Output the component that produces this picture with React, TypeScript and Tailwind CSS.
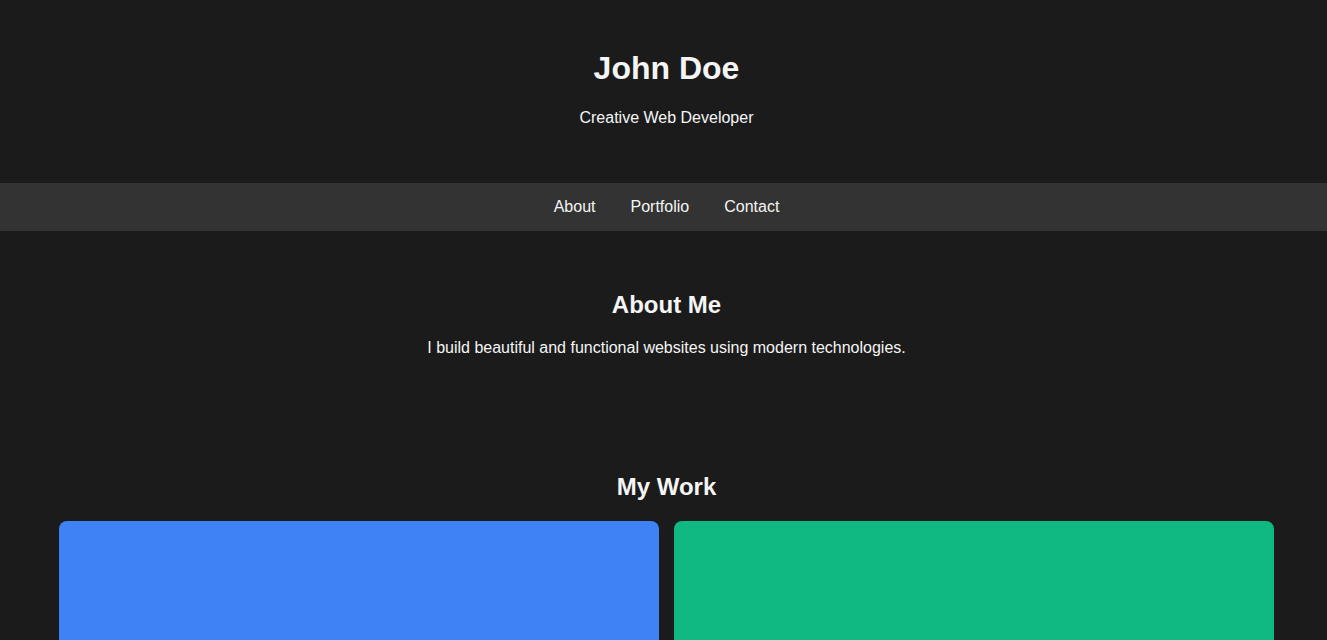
export default function App() {
  return (
    <div
      className="min-h-screen bg-[#1b1b1b] text-[#f5f5f5]"
      style={{ fontFamily: '"Liberation Sans", Arial, sans-serif' }}
    >
      <header className="flex flex-col items-center pt-[50px] pb-[56px] pl-[6px]">
        <h1 className="text-[32px] leading-[37px] font-bold">John Doe</h1>
        <p className="mt-[22px] text-base leading-[18px]">Creative Web Developer</p>
      </header>

      <nav className="h-12 bg-[#333333] flex items-center justify-center gap-[35px] pl-[6px] text-base">
        <a href="#about">About</a>
        <a href="#portfolio">Portfolio</a>
        <a href="#contact">Contact</a>
      </nav>

      <section id="about" className="flex flex-col items-center pt-[60px] pl-[6px]">
        <h2 className="text-2xl leading-[28px] font-bold">About Me</h2>
        <p className="mt-5 text-base leading-[18px]">
          I build beautiful and functional websites using modern technologies.
        </p>
      </section>

      <section id="portfolio" className="pt-[116px]">
        <h2 className="text-2xl leading-[28px] font-bold text-center pl-[6px]">My Work</h2>
        <div className="mt-5 grid grid-cols-2 gap-[15px] pl-[59px] pr-[53px]">
          <div className="h-[300px] rounded-lg bg-[#3e82f6]" />
          <div className="h-[300px] rounded-lg bg-[#10b982]" />
        </div>
      </section>
    </div>
  );
}
